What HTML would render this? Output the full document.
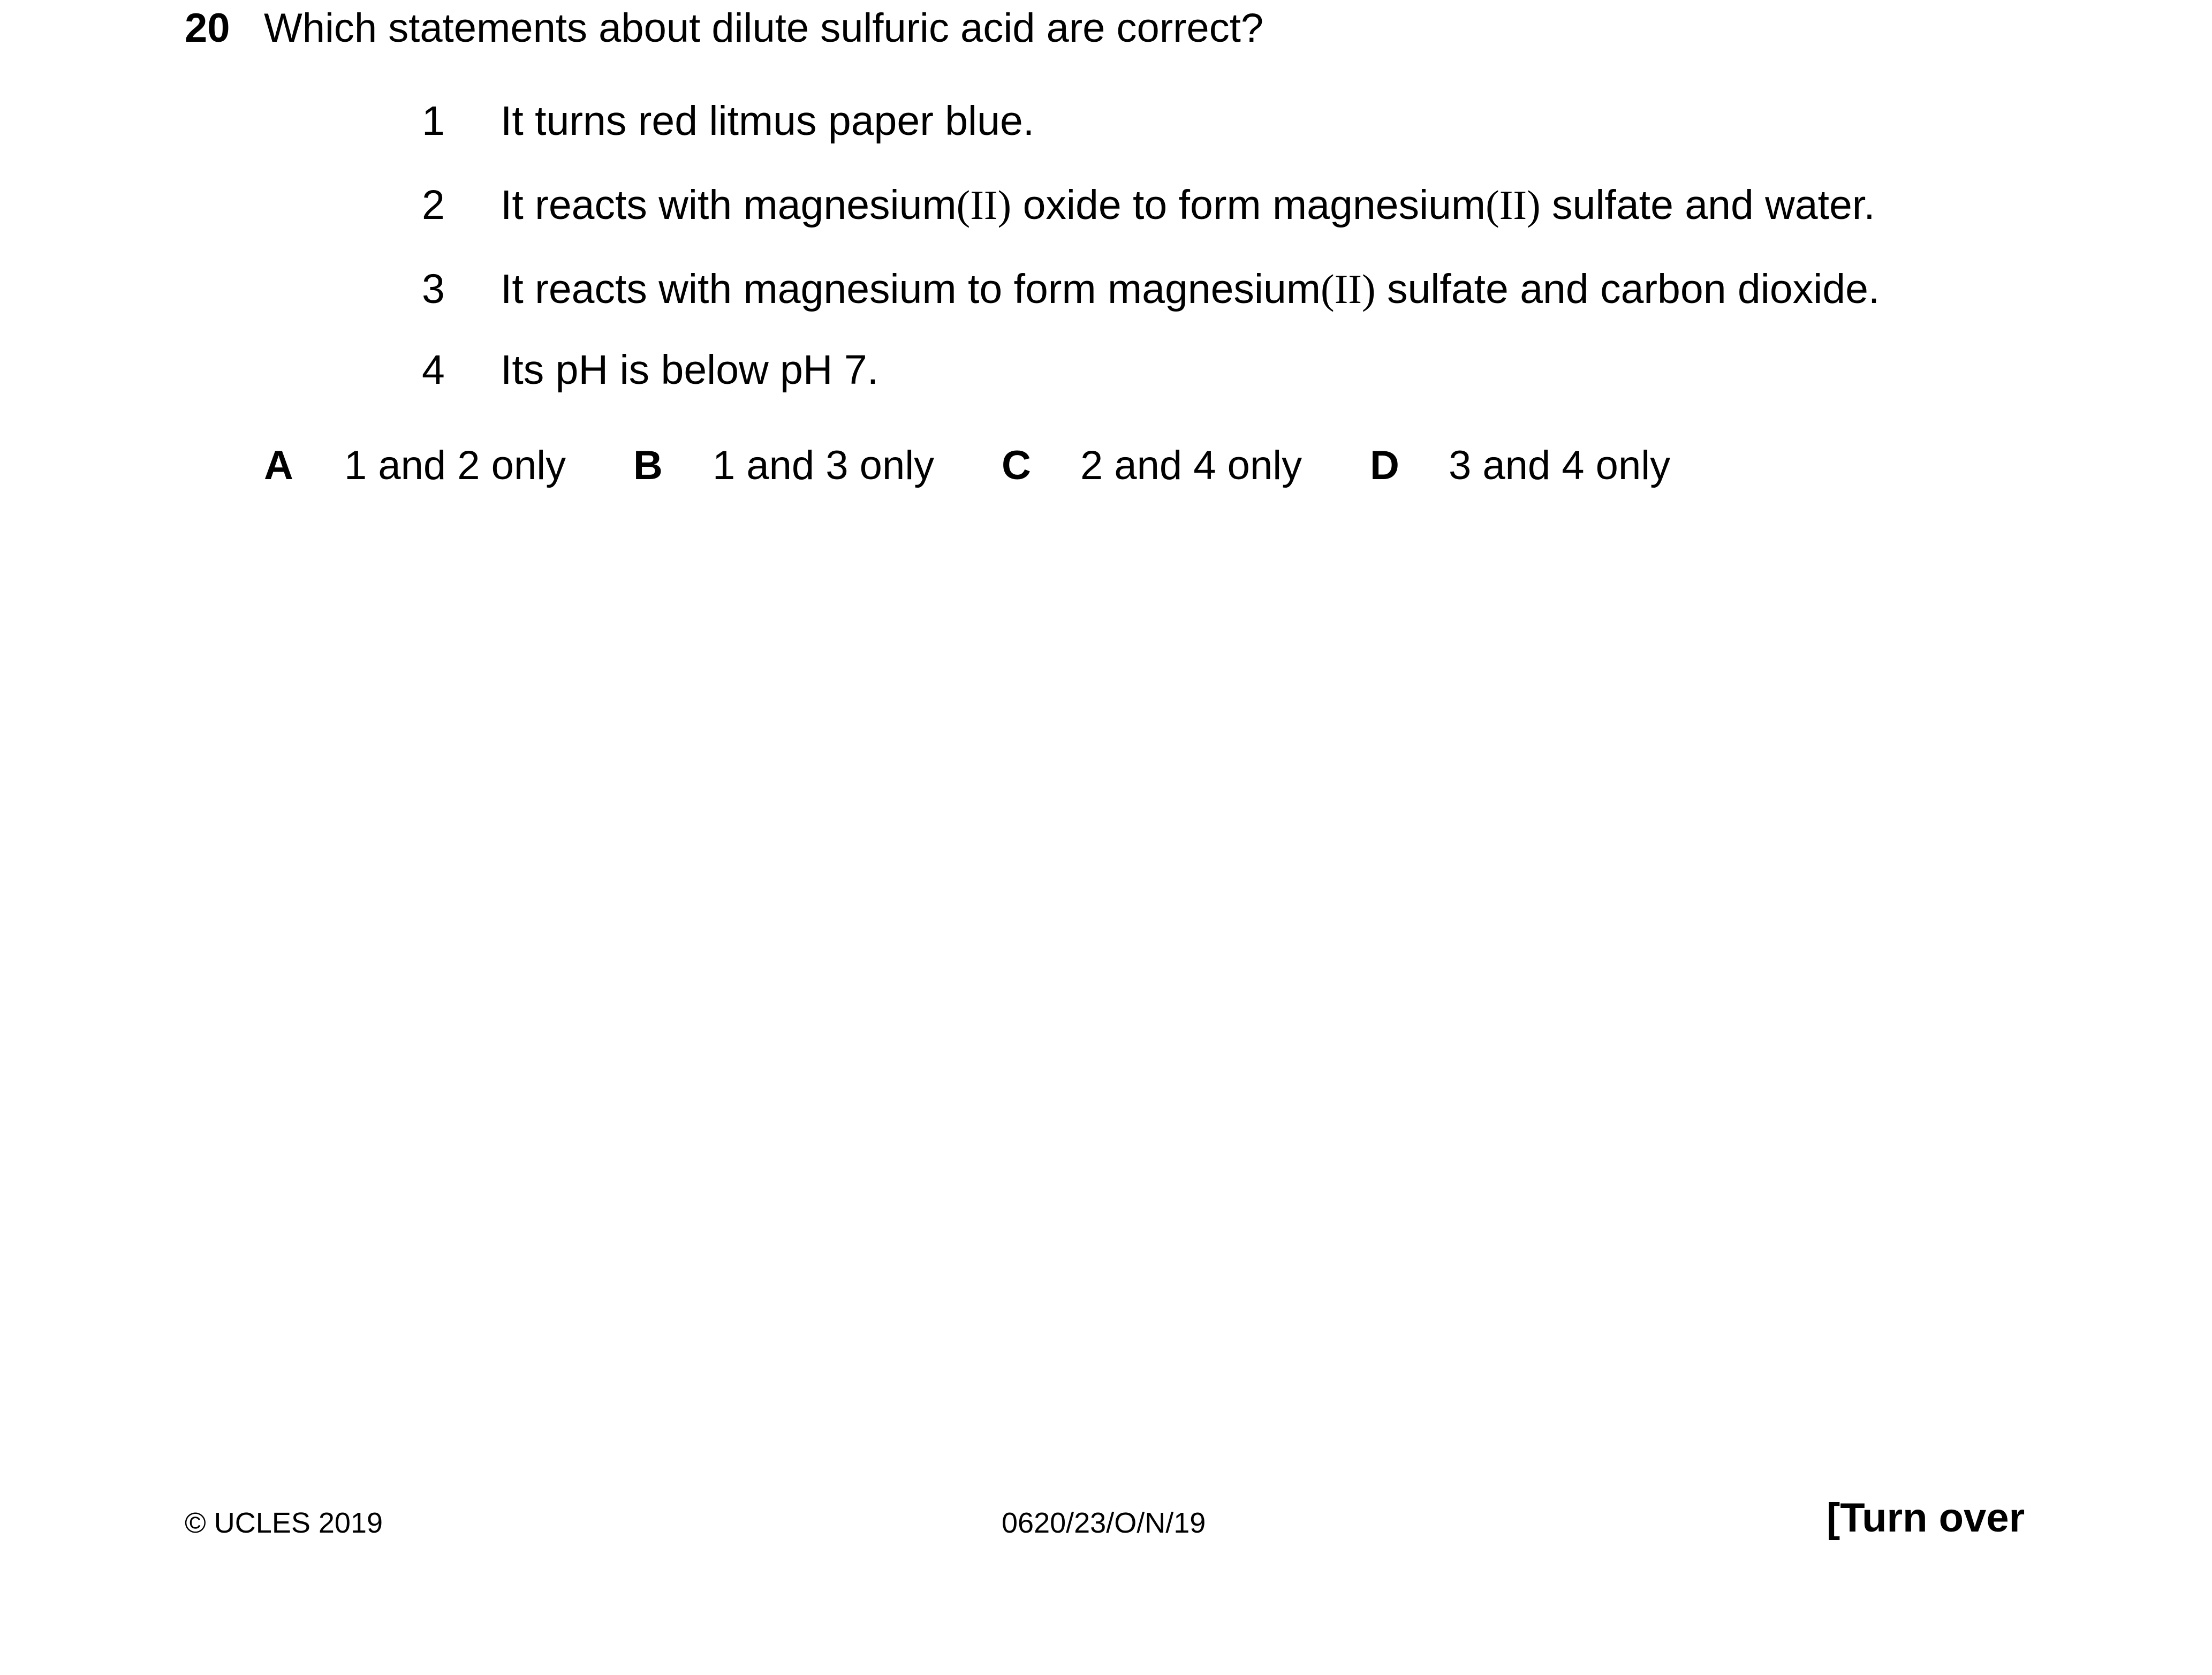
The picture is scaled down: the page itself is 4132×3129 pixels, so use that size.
<!DOCTYPE html>
<html><head><meta charset="utf-8"><style>
html,body{margin:0;padding:0;background:#fff;}
body{width:4132px;height:3129px;position:relative;overflow:hidden;font-family:"Liberation Sans",Arial,sans-serif;color:#000;}
.t{position:absolute;white-space:nowrap;line-height:1;}
.h{font-size:76px;}
.i{font-size:77px;}
.b{font-weight:bold;}
.f{font-size:54px;}
.r{font-family:"Liberation Serif",serif;}
</style></head><body>
<div class="t h b" style="left:345px;top:15px">20</div>
<div class="t h" style="left:493px;top:15px">Which statements about dilute sulfuric acid are correct?</div>

<div class="t i" style="left:788px;top:188px">1</div>
<div class="t i" style="left:935px;top:188px">It turns red litmus paper blue.</div>
<div class="t i" style="left:788px;top:345px">2</div>
<div class="t i" style="left:935px;top:345px">It reacts with magnesium<span class="r">(II)</span> oxide to form magnesium<span class="r">(II)</span> sulfate and water.</div>
<div class="t i" style="left:788px;top:502px">3</div>
<div class="t i" style="left:935px;top:502px">It reacts with magnesium to form magnesium<span class="r">(II)</span> sulfate and carbon dioxide.</div>
<div class="t i" style="left:788px;top:653px">4</div>
<div class="t i" style="left:935px;top:653px">Its pH is below pH 7.</div>

<div class="t h b" style="left:493px;top:832px">A</div>
<div class="t h" style="left:643px;top:832px">1 and 2 only</div>
<div class="t h b" style="left:1183px;top:832px">B</div>
<div class="t h" style="left:1331px;top:832px">1 and 3 only</div>
<div class="t h b" style="left:1871px;top:832px">C</div>
<div class="t h" style="left:2018px;top:832px">2 and 4 only</div>
<div class="t h b" style="left:2559px;top:832px">D</div>
<div class="t h" style="left:2706px;top:832px">3 and 4 only</div>

<div class="t f" style="left:345px;top:2818px">© UCLES 2019</div>
<div class="t f" style="left:1871px;top:2818px">0620/23/O/N/19</div>
<div class="t h b" style="left:3412px;top:2798px">[Turn over</div>
</body></html>
